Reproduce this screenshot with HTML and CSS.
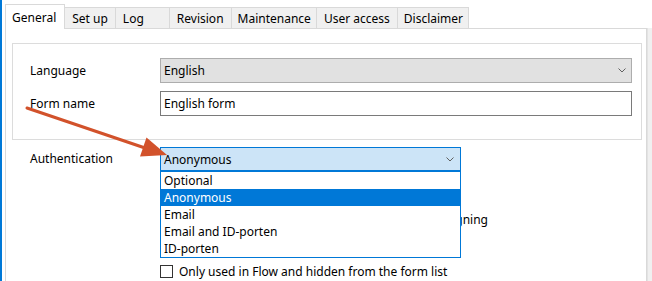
FILE: index.html
```html
<!DOCTYPE html>
<html lang="en">
<head>
    <meta charset="UTF-8">
    <title>Form properties</title>
    <link rel="stylesheet" href="styles.css">
</head>
<body>
    <div class="window">
        <div class="tabs">
            <div class="tab active">General</div>
            <div class="tab">Set up</div>
            <div class="tab tab-log">Log</div>
            <div class="tab">Revision</div>
            <div class="tab tab-tight">Maintenance</div>
            <div class="tab">User access</div>
            <div class="tab tab-tight">Disclaimer</div>
        </div>

        <div class="content">
            <div class="panel">
                <div class="group">
                    <div class="row">
                        <label class="label">Language</label>
                        <div class="select grey">
                            <span>English</span>
                            <svg class="chevron" width="8" height="5" viewBox="0 0 8 5"><polyline points="0.5,0.5 4,4 7.5,0.5" /></svg>
                        </div>
                    </div>
                    <div class="row">
                        <label class="label">Form name</label>
                        <div class="input">English form</div>
                    </div>
                </div>

                <div class="row auth">
                    <label class="label">Authentication</label>
                    <div class="combo">
                        <div class="select open">
                            <span>Anonymous</span>
                            <svg class="chevron" width="8" height="5" viewBox="0 0 8 5"><polyline points="0.5,0.5 4,4 7.5,0.5" /></svg>
                        </div>
                        <ul class="list">
                            <li>Optional</li>
                            <li class="selected">Anonymous</li>
                            <li>Email</li>
                            <li>Email and ID-porten</li>
                            <li>ID-porten</li>
                        </ul>
                    </div>
                </div>

                <div class="checks">
                    <div class="check"><span class="box"></span>Allow respondents to save drafts</div>
                    <div class="check"><span class="box"></span>Notify the respondent by email after the digital signing</div>
                    <div class="check"><span class="box"></span>Show progress bar</div>
                    <div class="check"><span class="box"></span>Only used in Flow and hidden from the form list</div>
                </div>
            </div>
            <div class="edge"></div>
        </div>

        <svg class="arrow" width="652" height="281" viewBox="0 0 652 281">
            <line x1="25" y1="108" x2="146" y2="149" />
            <polygon points="165,155 144.5,137.5 138,156.5" />
        </svg>
    </div>
</body>
</html>
```

FILE: styles.css
```css
html, body {
    margin: 0;
    padding: 0;
}

body {
    font-family: "Noto Sans", "Open Sans", sans-serif;
    font-size: 12px;
    color: #000;
    background: #fff;
}

.window {
    position: relative;
    width: 652px;
    height: 281px;
    overflow: hidden;
    border-left: 2px solid #0078d7;
    box-sizing: border-box;
    padding-left: 3px;
}

/* tab strip */
.tabs {
    display: flex;
    align-items: flex-end;
    height: 28px;
    box-sizing: border-box;
    padding-top: 4px;
}

.tab {
    height: 21px;
    box-sizing: border-box;
    padding: 2px 7px 0 7px;
    border: 1px solid #d9d9d9;
    border-bottom: none;
    background: #f0f0f0;
    margin-left: -1px;
    white-space: nowrap;
}

.tab.active {
    height: 25px;
    margin-left: 0;
    margin-bottom: -1px;
    padding: 4px 8px 0 6px;
    background: #fff;
    position: relative;
    z-index: 1;
}

.tab-log {
    min-width: 55px;
}

.tab.tab-tight {
    padding-left: 6px;
    padding-right: 5px;
}

/* panel */
.content {
    display: flex;
}

.panel {
    width: 642px;
    height: 260px;
    box-sizing: border-box;
    border: 1px solid #d9d9d9;
    background: #fff;
}

.edge {
    flex: 1;
    background: #f0f0f0;
    border-left: 1px solid #e3e3e3;
}

.group {
    margin: 14px 4px 0 6px;
    height: 97px;
    box-sizing: border-box;
    border: 1px solid #dcdcdc;
    padding: 14px 9px 0 17px;
    display: flex;
    flex-direction: column;
    gap: 8px;
}

.row {
    display: flex;
    align-items: center;
}

.label {
    width: 130px;
    flex-shrink: 0;
}

.select,
.input {
    flex: 1;
    height: 25px;
    box-sizing: border-box;
    padding: 0 5px 0 3px;
    display: flex;
    align-items: center;
    justify-content: space-between;
}

.select.grey {
    background: #e1e1e1;
    border: 1px solid #adadad;
}

.input {
    border: 1px solid #7a7a7a;
    background: #fff;
}

.chevron polyline {
    fill: none;
    stroke: #606060;
    stroke-width: 1;
}

/* authentication combo */
.auth {
    margin-top: 7px;
    padding-left: 24px;
    align-items: flex-start;
    height: 24px;
    position: relative;
    z-index: 2;
}

.auth .label {
    line-height: 24px;
}

.combo {
    width: 301px;
    position: relative;
}

.select.open {
    height: 24px;
    background: #cce4f7;
    border: 1px solid #0078d7;
    padding-right: 6px;
}

.list {
    position: absolute;
    top: 24px;
    left: 0;
    right: 0;
    margin: 0;
    padding: 0;
    list-style: none;
    background: #fff;
    border: 1px solid #0078d7;
}

.list li {
    height: 17px;
    line-height: 17px;
    padding-left: 3px;
}

.list li.selected {
    background: #0078d7;
    color: #fff;
}

/* checkboxes */
.checks {
    margin-top: 9px;
    padding-left: 154px;
}

.check {
    height: 26px;
    display: flex;
    align-items: center;
    white-space: nowrap;
}

.box {
    width: 13px;
    height: 13px;
    box-sizing: border-box;
    border: 1px solid #333;
    background: #fff;
    margin-right: 6px;
}

/* annotation */
.arrow {
    position: absolute;
    top: 0;
    left: 0;
    pointer-events: none;
    z-index: 5;
}

.arrow line {
    stroke: #d2522b;
    stroke-width: 3;
    stroke-linecap: round;
}

.arrow polygon {
    fill: #d2522b;
}
```
